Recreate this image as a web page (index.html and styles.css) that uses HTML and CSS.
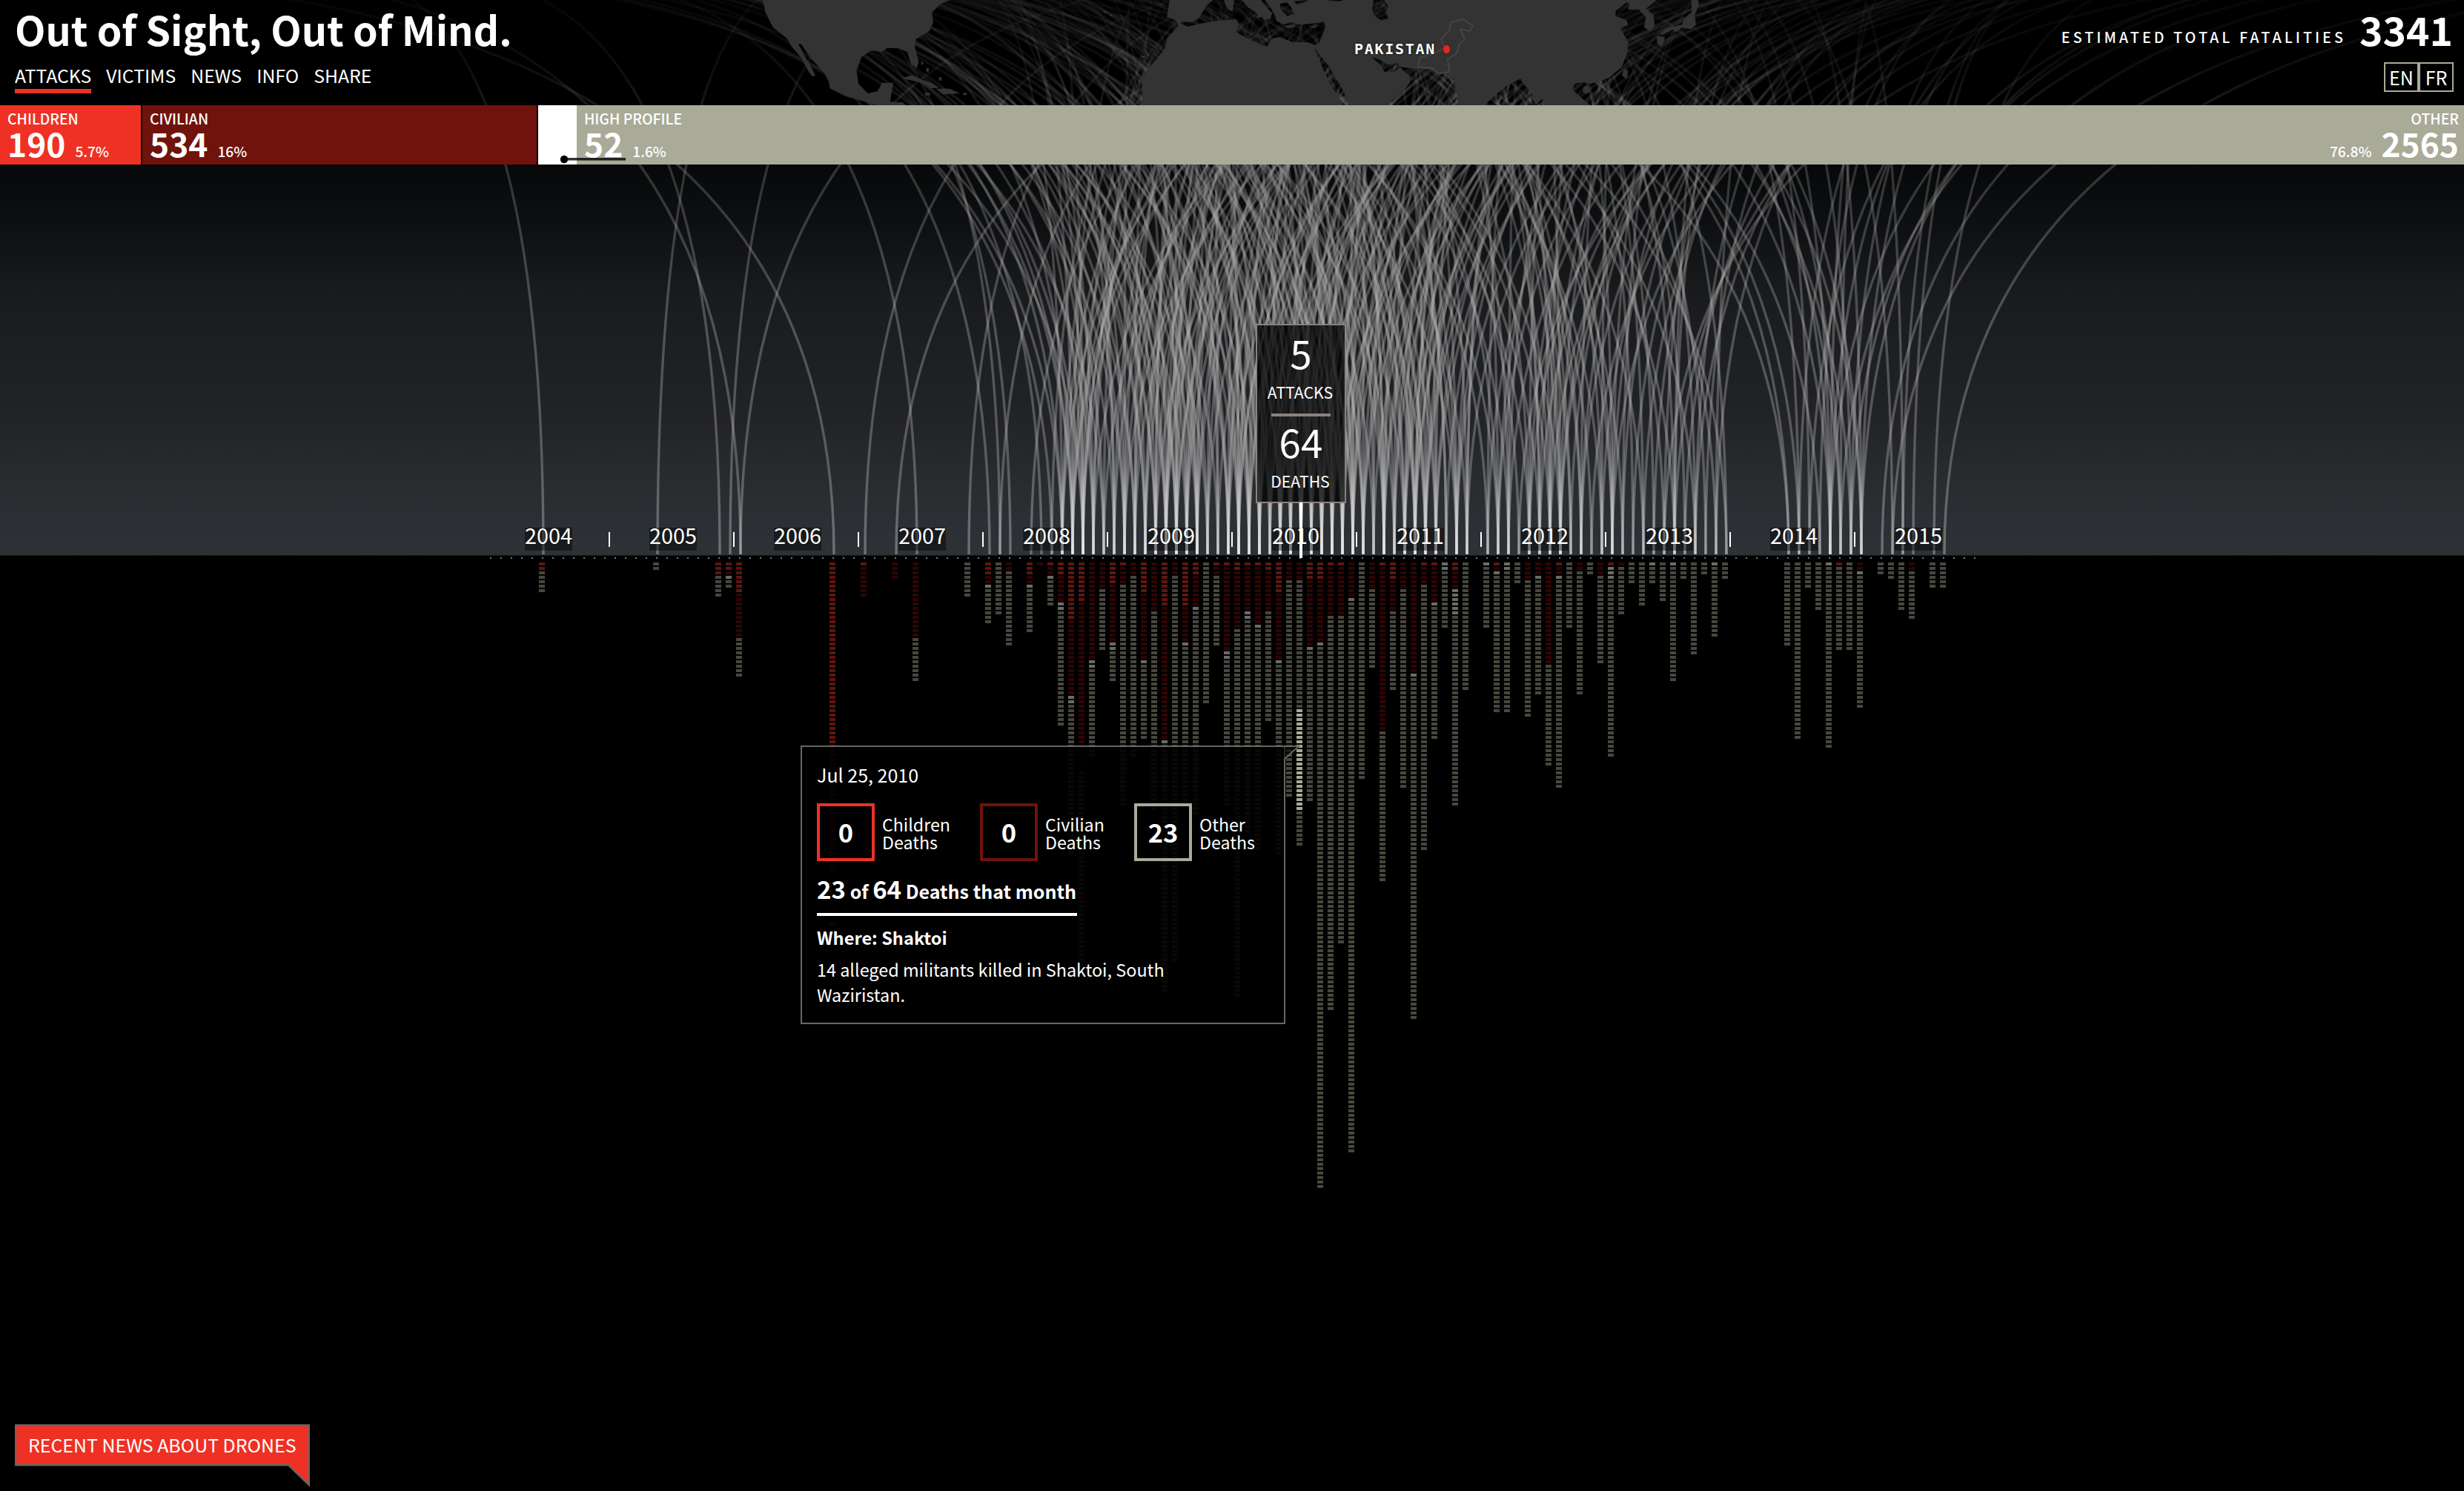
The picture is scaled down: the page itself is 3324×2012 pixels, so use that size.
FILE: index.html
```html
<!DOCTYPE html>
<html lang="en">
<head>
<meta charset="utf-8">
<title>Out of Sight, Out of Mind.</title>
<link rel="stylesheet" href="styles.css">
</head>
<body>
<div class="page">
  <svg class="arcs" id="arcs" width="3324" height="752" viewBox="0 0 3324 752" aria-hidden="true">
    <defs>
      <linearGradient id="trail" gradientUnits="userSpaceOnUse" x1="0" y1="-32" x2="0" y2="748">
        <stop offset="0" stop-color="#a0a0a0" stop-opacity=".02"/>
        <stop offset=".17" stop-color="#a0a0a0" stop-opacity=".09"/>
        <stop offset=".223" stop-color="#a0a0a0" stop-opacity=".15"/>
        <stop offset=".33" stop-color="#a0a0a0" stop-opacity=".27"/>
        <stop offset=".6" stop-color="#b4b4b4" stop-opacity=".35"/>
        <stop offset=".85" stop-color="#b8b8b8" stop-opacity=".36"/>
        <stop offset="1" stop-color="#ececec" stop-opacity=".34"/>
      </linearGradient>
    </defs>
  </svg>
  <svg class="map" width="1340" height="142" viewBox="0 0 1568 426" preserveAspectRatio="none" aria-hidden="true">
    <g fill="#333">
      <path d="M34 0L38 50 50 110 62 135 72 155 80 190 95 235 105 285 112 310 117 305 110 270 100 225 90 178 95 180 108 230 120 265 132 300 138 330 140 358 165 390 200 415 212 426H260L255 415 235 412 240 335 222 335 215 370 200 378 185 340 182 285 190 230 205 205 222 210 230 195 247 195 262 210 268 260 277 277 280 250 274 190 275 160 297 125 303 90 301 50 315 15 330 0Z"/>
      <path d="M253 315L270 305 285 322 300 335 312 355 300 358 285 335 262 322ZM308 362L318 358 330 360 345 378 332 380 318 382ZM290 376h8v10h-8zM350 376h6v9h-6zM572 45h5v6h-5zM582 60h4v6h-4zM628 150h4v8h-4zM632 225h5v10h-5zM640 218h4v8h-4zM284 250h3v12h-3zM292 275h4v15h-4zM312 312h4v14h-4z"/>
      <path fill-rule="evenodd" d="M676 0L672 70 685 80 690 105 683 125 672 155 668 200 655 240 640 285 632 330 634 380 631 426H950L945 400 932 350 920 290 912 240 905 195 917 235 928 270 938 315 950 365 960 426H1018L1030 400 1045 370 1055 335 1056 310 1045 285 1040 272 1030 290 1015 290 1010 265 995 232 1005 238 1020 262 1035 255 1042 272 1065 278 1090 282 1105 300 1115 290 1120 335 1125 315 1128 370 1132 426H1172L1190 385 1210 345 1230 318 1238 350 1248 370 1250 405 1254 424 1265 400 1268 426H1340L1328 400 1313 365 1315 338 1330 333 1340 340 1370 315 1390 270 1398 220 1400 170 1388 115 1400 100 1397 80 1380 65 1380 45 1397 10 1402 15 1400 40 1417 38 1428 70 1425 110 1435 125 1442 105 1440 60 1428 35 1445 0Z
        M693 95L697 88 712 90 722 75 728 50 735 20 745 0H762L765 25 770 42 776 45 778 0H790L800 30 810 45 815 60 813 72 822 68 825 80 835 78 838 55 828 25 820 0H826L835 28 842 60 845 85 855 100 868 90 882 100 900 95 920 88 922 110 912 175 905 182 895 172 870 170 850 150 838 155 830 188 810 170 795 150 782 130 785 100 782 78 750 85 725 95 705 108Z
        M850 15L862 10 868 30 872 55 862 65 852 40ZM872 5L895 0 890 8 876 18ZM925 0H950L945 6 930 4ZM998 0H1015L1022 30 1017 45 1022 75 1010 82 1000 65 996 40Z"/>
      <path d="M857 104l14-4 4 8-12 6zM896 106l16-4-8 12zM1500 0H1510L1512 20 1505 60 1507 100 1500 118 1485 112 1475 130 1470 120 1455 140 1448 140 1460 115 1485 100 1488 75 1500 50ZM1445 145L1458 150 1456 175 1452 188 1446 175ZM1394 278L1400 285 1398 320 1390 305ZM1330 350L1338 345 1340 372 1333 382 1328 370Z"/>
    </g>
    <path class="map-outline" d="M1140 78L1120 90 1118 120 1105 160 1110 195 1090 220 1072 232 1068 272 1090 275 1100 298 1118 290 1115 240 1130 215 1133 180 1142 160 1135 118 1150 125 1155 105Z"/>
  </svg>

  <header class="top">
    <div>
      <h1 class="title">Out of Sight, Out of Mind.</h1>
      <nav class="nav">
        <a class="active">ATTACKS</a><a>VICTIMS</a><a>NEWS</a><a>INFO</a><a>SHARE</a>
      </nav>
    </div>
    <div class="place">PAKISTAN<i class="place-dot"></i></div>
    <div class="summary">
      <div class="total"><span class="total-label">ESTIMATED TOTAL FATALITIES</span><b class="total-number">3341</b></div>
      <div class="langs"><a>EN</a><a>FR</a></div>
    </div>
  </header>

  <section class="bar">
    <div class="seg children"><span class="seg-label">CHILDREN</span><div class="seg-row"><b>190</b><span>5.7%</span></div></div>
    <div class="seg civilian"><span class="seg-label">CIVILIAN</span><div class="seg-row"><b>534</b><span>16%</span></div></div>
    <div class="seg profile"></div>
    <div class="seg profile-text"><span class="seg-label">HIGH PROFILE</span><div class="seg-row"><b>52</b><span>1.6%</span></div></div>
    <div class="seg other"><span class="seg-label">OTHER</span><div class="seg-row"><span>76.8%</span><b>2565</b></div></div>
    <svg class="pin" width="92" height="12" viewBox="0 0 92 12" aria-hidden="true"><circle cx="6" cy="6" r="5.2"/><path d="M6 5.7H89"/></svg>
  </section>

  <section class="sky">
    <div class="years">
      <span class="year">2004</span><i></i><span class="year">2005</span><i></i><span class="year">2006</span><i></i><span class="year">2007</span><i></i><span class="year">2008</span><i></i><span class="year">2009</span><i></i><span class="year">2010</span><i></i><span class="year">2011</span><i></i><span class="year">2012</span><i></i><span class="year">2013</span><i></i><span class="year">2014</span><i></i><span class="year">2015</span>
    </div>
    <div class="month">
      <span class="month-number">5</span>
      <span class="month-label">ATTACKS</span>
      <hr class="month-rule">
      <span class="month-number">64</span>
      <span class="month-label">DEATHS</span>
    </div>
  </section>

  <svg class="deaths" id="deaths" width="3324" height="1262" viewBox="0 750 3324 1262" aria-hidden="true"></svg>

  <aside class="tip">
    <svg class="tip-corner" width="22" height="20" viewBox="0 0 22 20" aria-hidden="true"><path class="tip-fill" d="M0 0H18L0 18Z"/><path class="tip-edge" d="M0 1H20L1 18"/></svg>
    <div class="tip-date">Jul 25, 2010</div>
    <div class="tip-counts">
      <div class="count count-children"><b>0</b><span>Children<br>Deaths</span></div>
      <div class="count count-civilian"><b>0</b><span>Civilian<br>Deaths</span></div>
      <div class="count count-other"><b>23</b><span>Other<br>Deaths</span></div>
    </div>
    <div class="tip-share"><big>23</big> of <big>64</big> Deaths that month</div>
    <div class="tip-where">Where: Shaktoi</div>
    <p class="tip-text">14 alleged militants killed in Shaktoi, South Waziristan.</p>
  </aside>

  <div class="news">
    <svg class="news-shape" width="398" height="86" viewBox="0 0 398 86" aria-hidden="true"><path d="M1 1H397V82L369 55H1Z"/></svg>
    <span>RECENT NEWS ABOUT DRONES</span>
  </div>
</div>
<script src="chart.js"></script>
</body>
</html>
```

FILE: styles.css
```css
* { box-sizing: border-box; }
body {
  margin: 0;
  background: #000;
  color: #fff;
  font-family: "Noto Sans CJK SC", "Noto Sans", sans-serif;
}
.page {
  position: relative;
  width: 3324px;
  height: 2012px;
  overflow: hidden;
  background: linear-gradient(#000 0, #000 142px, #070809 222px, #0e0f11 300px, #1a1b1d 400px, #222326 560px, #292b2f 650px, #2e3236 749px, #000 750px);
}
.arcs, .map { position: absolute; top: 0; left: 0; }
.arcs path { fill: none; stroke: url(#trail); stroke-width: 3.4; }
.map { left: 1000px; }
.map-outline { fill: none; stroke: #444; stroke-width: 2; vector-effect: non-scaling-stroke; }

/* header */
.top {
  position: relative;
  height: 142px;
  padding: 0 14px 0 20px;
  display: flex;
  justify-content: space-between;
  white-space: nowrap;
}
.title { margin: 0 0 4px; font-size: 53.9px; line-height: 78px; font-weight: 700; }
.nav { display: flex; gap: 20px; font-size: 24.8px; line-height: 38px; }
.nav a { height: 44px; }
.nav .active { border-bottom: 6px solid #ee3124; }
.place {
  position: absolute;
  left: 1827px;
  top: 53px;
  display: flex;
  align-items: center;
  gap: 10px;
  font: bold 20px/26px "DejaVu Sans Mono", monospace;
  letter-spacing: 1.7px;
  text-shadow: 0 0 3px #000;
}
.place-dot { width: 9px; height: 11px; border-radius: 50%; background: #e02a1c; box-shadow: 0 0 3px #700; }
.summary { display: flex; flex-direction: column; align-items: flex-end; gap: 6px; }
.total { display: flex; gap: 18px; line-height: 78px; padding-right: 1px; }
.total-label { font-size: 19.6px; font-weight: 500; letter-spacing: 4.1px; position: relative; top: 11px; }
.total-number { font-size: 53.4px; }
.langs { display: flex; font-size: 25px; line-height: 36px; }
.langs a { width: 47px; height: 40px; border: 2px solid #a9aa98; text-align: center; }

/* proportion bar */
.bar { position: relative; height: 80px; display: flex; background: #000; white-space: nowrap; }
.seg { padding: 6px 7px 0 10px; }
.children { width: 190px; margin-right: 2px; background: #ee3124; }
.civilian { width: 532px; margin-right: 2px; background: #6f130c; }
.profile { width: 52px; background: #fff; }
.profile-text { flex: 1; background: #a9aa98; }
.other { width: 400px; background: #a9aa98; display: flex; flex-direction: column; align-items: flex-end; }
.seg-label { display: block; font-size: 19.4px; font-weight: 500; line-height: 24px; }
.seg-row { display: flex; align-items: baseline; gap: 13px; height: 44px; font-size: 19.2px; font-weight: 500; line-height: 42px; }
.seg-row b { font-size: 44.3px; }
.pin { position: absolute; left: 755px; top: 67px; }
.pin circle { fill: #000; }
.pin path { stroke: #000; stroke-opacity: .8; stroke-width: 3.4; }

/* timeline */
.sky { position: relative; height: 528px; display: flex; align-items: flex-end; padding: 0 0 7px 708px; }
.years { display: flex; height: 31px; }
.year { width: 64px; background: rgba(0, 0, 0, .45); font-size: 28.8px; line-height: 19px; height: 31px; text-align: center; }
.years i { width: 2px; height: 20px; margin: 6px 53px 0 49px; background: #fff; }
.month {
  position: absolute;
  left: 1694px;
  top: 215px;
  width: 122px;
  height: 242px;
  border: 2px solid #8c817a;
  background: rgba(0, 0, 0, .72);
  display: flex;
  flex-direction: column;
  align-items: center;
}
.month::after { content: ""; position: absolute; left: 57px; top: 239px; width: 4px; height: 75px; background: #fff; }
.month-number { font-size: 53px; line-height: 72px; height: 76px; }
.month-label { font-size: 21.2px; line-height: 28px; height: 30px; margin-left: -2px; }
.month-rule { width: 80px; height: 4px; margin: 13px 0 -3px; border: 0; background: #8c817a; }

.deaths { display: block; }

/* attack details */
.tip {
  position: absolute;
  left: 1080px;
  top: 1006px;
  width: 654px;
  height: 376px;
  padding: 22px 20px;
  border: 2px solid #666;
  background: rgba(0, 0, 0, .88);
  font-size: 25px;
}
.tip-corner { position: absolute; left: 650px; top: -2px; }
.tip-fill { fill: #000; fill-opacity: .6; }
.tip-edge { fill: none; stroke: #666; stroke-width: 2; }
.tip-date { line-height: 31px; height: 32px; }
.tip-counts { display: flex; margin-top: 22px; height: 78px; }
.count { display: flex; align-items: center; gap: 10px; }
.count b { flex: none; width: 78px; height: 78px; border: 4px solid; color: #fff; font-size: 34.5px; line-height: 68px; text-align: center; }
.count span { font-size: 23.2px; line-height: 24px; padding-top: 2px; }
.count-children { width: 220px; }
.count-civilian { width: 208px; }
.count-children b { border-color: #ee3124; }
.count-civilian b { border-color: #6f130c; }
.count-other b { border-color: #a9aa98; }
.tip-share { width: 351px; margin-top: 22px; height: 52px; border-bottom: 4px solid #fff; font-size: 25px; font-weight: 700; line-height: 30px; white-space: nowrap; }
.tip-share big { font-size: 33px; line-height: 30px; }
.tip-where { margin-top: 11px; font-size: 23.6px; font-weight: 700; line-height: 36px; }
.tip-text { width: 500px; margin: 8px 0 0; font-size: 23.4px; line-height: 34px; }

/* news button */
.news { position: absolute; left: 20px; top: 1922px; width: 398px; height: 56px; }
.news-shape { position: absolute; left: 0; top: 0; }
.news-shape path { fill: #ee3124; stroke: #666; stroke-width: 2.4; }
.news span { position: relative; display: block; padding-left: 18px; font-size: 24.9px; line-height: 54px; white-space: nowrap; }
```

FILE: chart.js
```js
// Monthly deaths: [month index from June 2004, children, civilian, high profile, other]
const months = [
  [0,2,0,0,5],[11,0,0,0,2],[17,3,0,0,5],[18,2,1,1,2],[19,7,10,0,9],[28,70,11,0,1],[31,1,7,0,0],[34,0,4,0,0],
  [36,0,17,0,10],[41,0,0,0,8],[43,3,2,1,8],[44,0,0,0,12],[45,0,2,0,17],[47,3,2,1,10],[48,0,1,0,0],[49,1,2,1,6],
  [50,3,6,2,26],[51,13,17,2,34],[52,9,38,0,43],[53,0,22,2,20],[54,0,6,0,14],[55,5,13,2,7],[56,1,4,0,50],
  [57,0,3,0,41],[58,7,15,1,17],[59,0,11,0,45],[60,10,30,1,56],[61,0,3,0,87],[62,10,8,1,35],[63,3,7,1,46],
  [64,0,0,0,32],[65,1,2,0,16],[66,1,19,2,33],[67,2,13,0,83],[68,1,10,2,48],[69,1,13,1,50],[70,2,9,0,25],
  [71,7,15,1,43],[72,0,4,0,49],[73,0,4,0,60],[74,4,15,1,34],[75,4,14,1,122],[76,1,11,0,89],[77,1,11,0,74],
  [78,0,8,1,124],[79,0,0,0,49],[80,0,6,0,18],[81,1,37,0,34],[82,4,7,0,18],[83,0,6,0,45],[84,0,25,1,77],
  [85,1,4,0,60],[86,1,8,1,30],[87,0,0,2,13],[88,2,4,6,43],[89,0,0,0,29],[91,0,0,1,14],[92,1,1,1,31],
  [93,0,0,2,32],[94,0,0,0,5],[95,0,4,0,31],[96,0,3,1,26],[97,0,23,0,23],[98,1,2,1,47],[99,0,0,0,15],
  [100,0,2,0,28],[101,0,0,0,3],[102,0,3,0,20],[103,1,0,3,40],[104,0,1,0,11],[105,0,0,0,5],[106,0,0,0,10],
  [107,0,0,1,4],[108,0,0,0,9],[109,0,0,1,26],[110,0,0,0,4],[111,0,0,0,21],[112,0,0,0,3],[113,0,0,1,16],
  [114,0,0,0,4],[120,0,0,0,19],[121,0,0,0,40],[122,0,0,0,6],[123,0,0,0,11],[124,0,0,1,41],[125,1,0,0,19],
  [126,0,0,0,20],[127,0,2,1,30],[129,0,0,0,3],[130,0,0,0,4],[131,0,0,0,11],[132,0,2,0,11],[134,0,0,0,6],[135,0,0,0,6]
];
const colors = ['#5f1510', '#2e0504', '#6b6b6b', '#47473f'];

let out = '';
for (let i = -5; i <= 138; i++) out += `<rect x="${731 + 14 * i}" y="752" width="2" height="2" fill="#777"/>`;
for (const [i, ...kinds] of months) {
  let row = 0;
  kinds.forEach((n, k) => {
    for (let j = 0; j < n; j++, row++) {
      const lit = i === 73 && row >= 33 && row <= 55;
      out += `<rect x="${727 + 14 * i}" y="${759 + 6 * row}" width="8" height="4" fill="${lit ? '#a9aa98' : colors[k]}"/>`;
    }
  });
}
document.getElementById('deaths').innerHTML = out;

// Horizontal drift of each flight path at the foot of the proportion bar
const known = {
  0:[-51], 11:[39], 17:[-69], 18:[51], 19:[-136,134], 28:[-211], 31:[120], 34:[195], 36:[-92], 41:[93], 42:[156],
  43:[-114], 44:[120,-60], 45:[-79], 47:[130], 48:[-110], 49:[-160,60], 129:[169], 130:[219,-37], 131:[-15,40],
  132:[37], 134:[61], 135:[230], 120:[-146,-200], 121:[-150,60,-40], 122:[-30,100], 123:[-170,50], 112:[-80,70],
  113:[-140,100,20], 114:[-190,-60], 110:[-60,120]
};
let seed = 20;
const rand = () => (seed = (seed * 16807) % 2147483647) / 2147483647;
let paths = '';
for (const [i, ...kinds] of months) {
  const total = kinds.reduce((a, b) => a + b, 0);
  let drifts = known[i];
  if (!drifts) {
    const n = Math.max(2, Math.min(9, Math.round(total / 10 + 1.8)));
    // spread the month's attacks evenly over the fan, with some jitter
    drifts = Array.from({ length: n }, (_, k) => ((k + rand()) / n * 2 - 1) * 175 + (rand() - 0.5) * 40);
  }
  const x = 733 + 14 * i;
  for (const d of drifts) paths += `<path d="M${x} 748Q${x} -32 ${(x + d / 0.184).toFixed(1)} -32"/>`;
}
document.getElementById('arcs').insertAdjacentHTML('beforeend', paths);
```
